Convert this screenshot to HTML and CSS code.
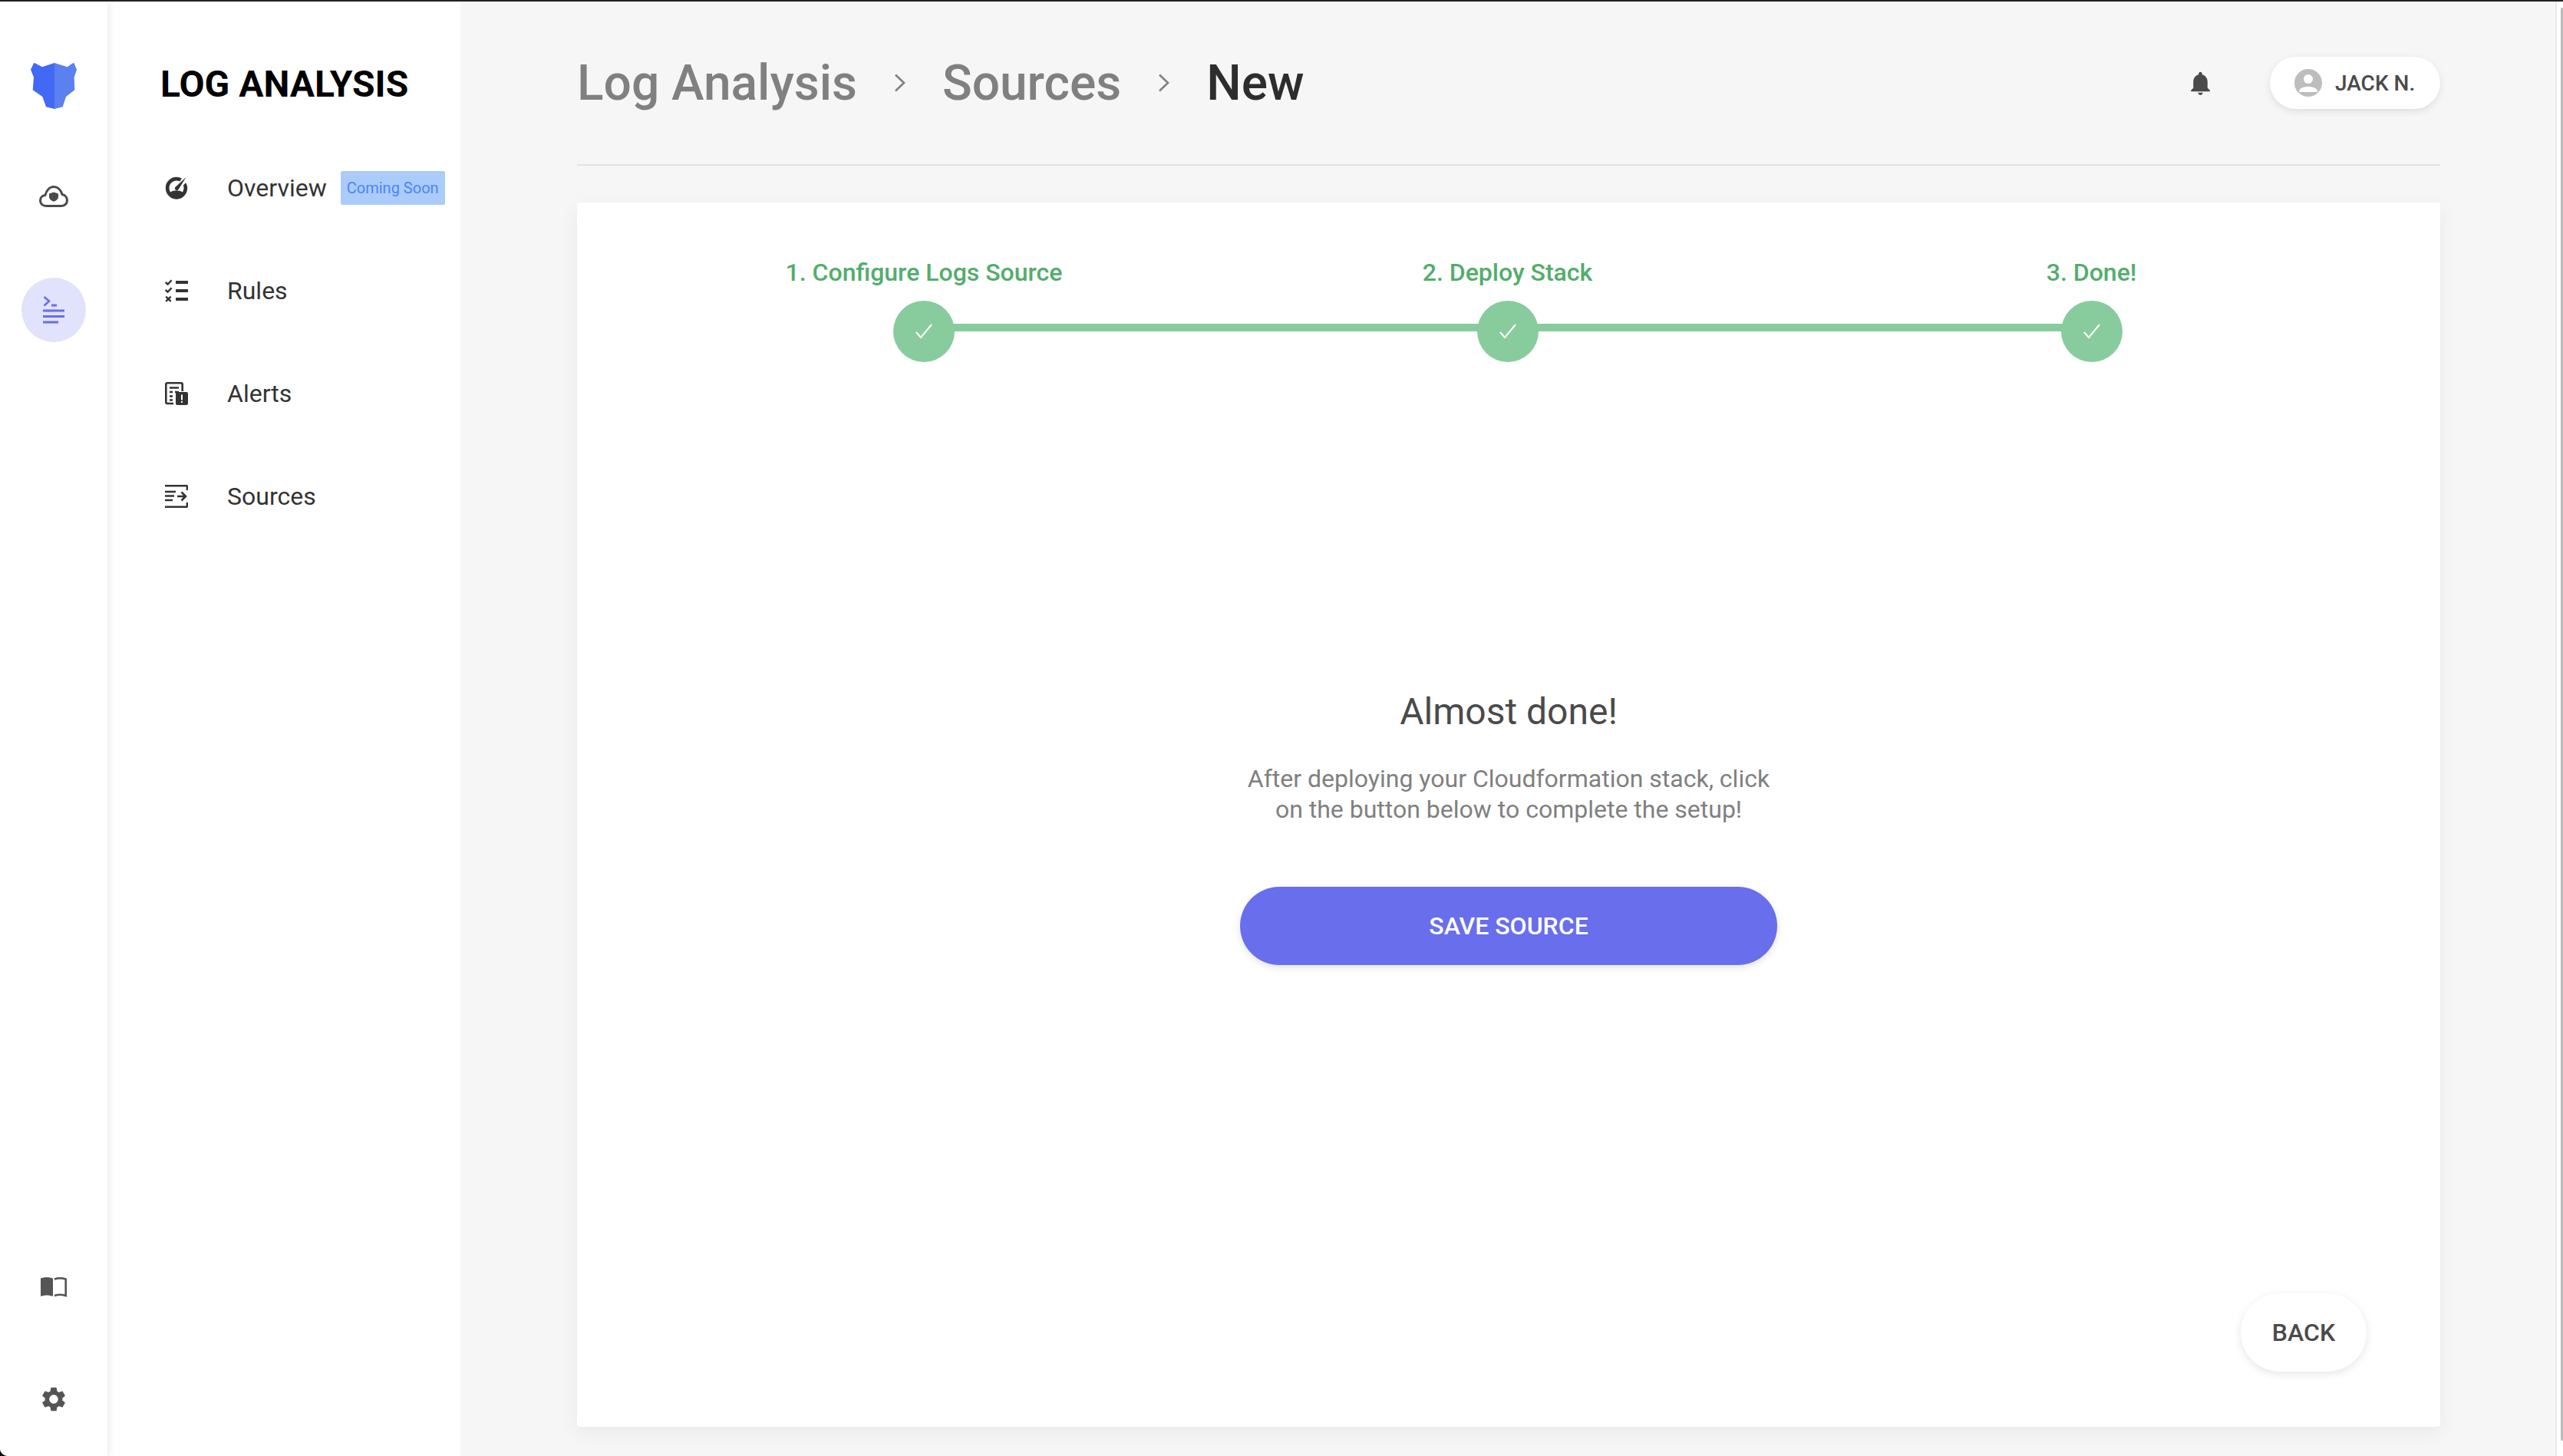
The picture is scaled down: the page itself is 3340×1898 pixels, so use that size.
FILE: index.html
```html
<!DOCTYPE html>
<html>
<head>
    <title>Log Analysis - New Source</title>
    <link rel="stylesheet" href="styles.css">
</head>
<body>
<div class="app">
    <div class="top-edge"></div>
    <div class="layout">
        <!-- Icon rail -->
        <aside class="rail">
            <svg class="logo" viewBox="0 0 60 60">
                <path fill="#4169f5" d="M31 0L15 5.3L5.5 .3L4 .3L0 8.7L4 18.7L2.7 35.3L15.3 44L20 57.3L31 60Z"/>
                <path fill="#5b80f0" d="M31 0L47.7 5.3L55 .3L56.5 .3L60 8.7L56.7 18.7L57.3 35.3L46 44L41.7 57.3L31 60Z"/>
            </svg>
            <div class="rail-item">
                <svg width="38" height="28" viewBox="0 0 38 28">
                    <path fill="none" stroke="#4a4a4a" stroke-width="3" stroke-linejoin="round" d="M9 26.5C4.6 26.5 1.5 23.4 1.5 19.5C1.5 15.6 4.4 12.8 8 12.5C9.6 6 13.8 1.5 19 1.5C24.2 1.5 28.4 5.6 30 11.5C33.8 12.2 36.5 15.2 36.5 19.3C36.5 23.4 33.4 26.5 29 26.5Z"/>
                    <path fill="#4a4a4a" d="M19 8.5L25 10.5V14.5C25 17.6 22.4 19.6 19 20.8C15.6 19.6 13 17.6 13 14.5V10.5Z"/>
                </svg>
            </div>
            <div class="rail-item rail-item-active">
                <svg width="28" height="36" viewBox="0 0 28 36">
                    <path fill="none" stroke="#686eec" stroke-width="2.6" d="M1.5 1L8 6.5L1.5 12.5"/>
                    <path fill="none" stroke="#686eec" stroke-width="3" d="M11 12H18M0 19H28M0 26.5H28M0 34H20"/>
                </svg>
            </div>
            <div class="rail-spacer"></div>
            <div class="rail-item">
                <svg class="rail-book" width="34" height="26" viewBox="0 0 34 26">
                    <path fill="#555" d="M0 1.5C5 -.5 11 -.5 16 1.5V25C11 23 5 23 0 25Z"/>
                    <path fill="none" stroke="#555" stroke-width="2.6" d="M18 2.5C22.5 .8 28 .8 32.7 2.5V24C28 22.4 22.5 22.4 18 24"/>
                </svg>
            </div>
            <div class="rail-item">
                <svg width="38" height="38" viewBox="0 0 24 24">
                    <path fill="#555" d="M19.14 12.94c.04-.3.06-.61.06-.94 0-.32-.02-.64-.07-.94l2.03-1.58c.18-.14.23-.41.12-.61l-1.92-3.32c-.12-.22-.37-.29-.59-.22l-2.39.96c-.5-.38-1.03-.7-1.62-.94l-.36-2.54c-.04-.24-.24-.41-.48-.41h-3.84c-.24 0-.43.17-.47.41l-.36 2.54c-.59.24-1.13.57-1.62.94l-2.39-.96c-.22-.08-.47 0-.59.22L2.74 8.87c-.12.21-.08.47.12.61l2.03 1.58c-.05.3-.09.63-.09.94s.02.64.07.94l-2.03 1.58c-.18.14-.23.41-.12.61l1.92 3.32c.12.22.37.29.59.22l2.39-.96c.5.38 1.03.7 1.62.94l.36 2.54c.05.24.24.41.48.41h3.84c.24 0 .44-.17.47-.41l.36-2.54c.59-.24 1.13-.56 1.62-.94l2.39.96c.22.08.47 0 .59-.22l1.92-3.32c.12-.22.07-.47-.12-.61l-2.01-1.58zM12 15.6c-1.98 0-3.6-1.62-3.6-3.6s1.62-3.6 3.6-3.6 3.6 1.62 3.6 3.6-1.62 3.6-3.6 3.6z"/>
                </svg>
            </div>
        </aside>

        <!-- Section nav -->
        <nav class="side-nav">
            <h2 class="side-title">LOG ANALYSIS</h2>
            <a class="nav-item">
                <svg class="nav-icon" viewBox="0 0 30 30">
                    <path fill="#333" d="M15 .8C17.6 .8 20 1.5 22 2.8L19.2 6.4C18 5.8 16.6 5.5 15 5.5C9.8 5.5 5.5 9.8 5.5 15C5.5 17 6.1 18.8 7.2 20.4C9 19 12 18.3 15 18.3C18 18.3 21 19 22.8 20.4C23.9 18.8 24.5 17 24.5 15C24.5 13.8 24.3 12.7 23.9 11.6L27 8.2C28.3 10.2 29.2 12.5 29.2 15C29.2 23.2 22.8 29.7 15 29.7C7.2 29.7 .8 23.2 .8 15C.8 7.2 7.2 .8 15 .8Z"/>
                    <path fill="#333" d="M27.5 1L17.5 17C16.6 18.2 15 18.4 13.8 17.5C12.7 16.6 12.5 15 13.4 14Z"/>
                </svg>
                <span>Overview</span>
                <span class="badge">Coming Soon</span>
            </a>
            <a class="nav-item">
                <svg class="nav-icon" viewBox="0 0 30 30">
                    <path fill="none" stroke="#333" stroke-width="2.4" d="M.8 4L3.6 6.6L8.6 1.2M.8 14L3.6 16.6L8.6 11.2M1.2 22.6L7.6 28.8M7.6 22.6L1.2 28.8"/>
                    <path fill="none" stroke="#333" stroke-width="4" d="M14 4H30M14 15H30M14 26H30"/>
                </svg>
                <span>Rules</span>
            </a>
            <a class="nav-item">
                <svg class="nav-icon" viewBox="0 0 30 30">
                    <path fill="none" stroke="#333" stroke-width="2.6" d="M11 28H3C2 28 1.3 27.3 1.3 26.3V3C1.3 2 2 1.3 3 1.3H21C22 1.3 22.7 2 22.7 3V12"/>
                    <path fill="none" stroke="#333" stroke-width="2.6" d="M6 7.5H18M6 13H10M13 13H18M6 18.5H10M6 23.5H10"/>
                    <rect x="14" y="13" width="16" height="17" rx="2" fill="#333"/>
                    <path fill="#fff" d="M21 16.5H23V23.5H21ZM21 25H23V27H21Z"/>
                </svg>
                <span>Alerts</span>
            </a>
            <a class="nav-item">
                <svg class="nav-icon" viewBox="0 0 30 30">
                    <path fill="none" stroke="#333" stroke-width="2.6" d="M0 1.3H28C28.8 1.3 29 2 29 3V7M0 28.7H28C28.8 28.7 29 28 29 27V23"/>
                    <path fill="none" stroke="#333" stroke-width="2.6" d="M0 9H14M0 14.5H12M0 20H10M16 15H26M21.5 9.5L27 15L21.5 20.5"/>
                </svg>
                <span>Sources</span>
            </a>
        </nav>

        <!-- Main content -->
        <main class="main">
            <header class="header">
                <div class="crumbs">
                    <span>Log Analysis</span>
                    <svg class="crumb-sep" width="16" height="24" viewBox="0 0 16 24"><path fill="none" stroke="#808080" stroke-width="2.6" d="M2 1.5L13 12L2 22.5"/></svg>
                    <span>Sources</span>
                    <svg class="crumb-sep" width="16" height="24" viewBox="0 0 16 24"><path fill="none" stroke="#808080" stroke-width="2.6" d="M2 1.5L13 12L2 22.5"/></svg>
                    <span class="crumb-current">New</span>
                </div>
                <div class="header-actions">
                    <svg class="bell" width="37" height="37" viewBox="0 0 24 24">
                        <path fill="#4a4a4a" d="M12 22c1.1 0 2-.9 2-2h-4c0 1.1.89 2 2 2zm6-6v-5c0-3.07-1.64-5.64-4.5-6.32V4c0-.83-.67-1.5-1.5-1.5s-1.5.67-1.5 1.5v.68C7.63 5.36 6 7.92 6 11v5l-2 2v1h16v-1l-2-2z"/>
                    </svg>
                    <button class="user-pill">
                        <svg width="36" height="36" viewBox="0 0 36 36">
                            <circle cx="18" cy="18" r="18" fill="#bdbdbd"/>
                            <circle cx="18" cy="13" r="6" fill="#fff"/>
                            <path fill="#fff" d="M6 30C6 25 11 23 18 23C25 23 30 25 30 30Z"/>
                        </svg>
                        <span>JACK N.</span>
                    </button>
                </div>
            </header>

            <section class="card">
                <div class="steps">
                    <div class="step">
                        <div class="step-label">1. Configure Logs Source</div>
                        <div class="step-dot"><svg width="26" height="24" viewBox="0 0 26 24"><path fill="none" stroke="#fff" stroke-width="2" d="M3 13L9 20L23 3"/></svg></div>
                    </div>
                    <div class="step">
                        <div class="step-label">2. Deploy Stack</div>
                        <div class="step-dot"><svg width="26" height="24" viewBox="0 0 26 24"><path fill="none" stroke="#fff" stroke-width="2" d="M3 13L9 20L23 3"/></svg></div>
                    </div>
                    <div class="step">
                        <div class="step-label">3. Done!</div>
                        <div class="step-dot"><svg width="26" height="24" viewBox="0 0 26 24"><path fill="none" stroke="#fff" stroke-width="2" d="M3 13L9 20L23 3"/></svg></div>
                    </div>
                </div>

                <div class="finish">
                    <h3 class="finish-title">Almost done!</h3>
                    <p class="finish-text">After deploying your Cloudformation stack, click<br>on the button below to complete the setup!</p>
                    <button class="save-button">SAVE SOURCE</button>
                </div>

                <div class="card-footer">
                    <button class="back-button">BACK</button>
                </div>
            </section>
        </main>

        <div class="scroll-strip"><div class="scroll-thumb"></div></div>
    </div>
</div>
</body>
</html>
```

FILE: styles.css
```css
* {
    box-sizing: border-box;
}
html, body {
    margin: 0;
    height: 100%;
    overflow: hidden;
    background: #000;
}
body {
    font-family: Roboto, "Liberation Sans", sans-serif;
    color: #333;
}
button {
    font-family: inherit;
    border: 0;
    cursor: pointer;
}

.app {
    height: 1898px;
    display: flex;
    flex-direction: column;
    background: #f6f6f6;
    border-bottom-left-radius: 10px;
    overflow: hidden;
}
.top-edge {
    height: 2px;
    background: #222;
    flex: none;
}
.layout {
    flex: 1;
    display: flex;
    min-height: 0;
}

/* --- Icon rail --- */
.rail {
    width: 140px;
    flex: none;
    background: #fff;
    display: flex;
    flex-direction: column;
    align-items: center;
    padding: 80px 0 32px;
    position: relative;
    z-index: 2;
    box-shadow: 3px 0 8px rgba(0, 0, 0, 0.07);
}
.logo {
    width: 60px;
    height: 60px;
    margin-bottom: 72px;
}
.rail-item {
    width: 84px;
    height: 84px;
    display: flex;
    align-items: center;
    justify-content: center;
    border-radius: 50%;
    flex: none;
}
.rail-item + .rail-item {
    margin-top: 64px;
}
.rail-item-active {
    background: #e1e2fb;
}
.rail-spacer {
    flex: 1;
}
.rail-spacer + .rail-item {
    margin-top: 0;
}
.rail-book {
    margin-top: 4px;
}

/* --- Section nav --- */
.side-nav {
    width: 460px;
    flex: none;
    background: #fff;
    padding: 80px 0 0 69px;
    display: flex;
    flex-direction: column;
    gap: 74px;
}
.side-title {
    margin: 0 0 3px;
    font-size: 48px;
    line-height: 56px;
    font-weight: 700;
    color: #000;
}
.nav-item {
    display: flex;
    align-items: center;
    height: 60px;
    font-size: 32px;
    color: #333;
    white-space: nowrap;
}
.nav-icon {
    width: 30px;
    height: 30px;
    margin: 0 51px 0 6px;
    flex: none;
}
.badge {
    width: 136px;
    height: 44px;
    margin-left: 18px;
    background: #abcbfb;
    border-radius: 2px;
    color: #4a87f0;
    font-size: 20px;
    line-height: 44px;
    text-align: center;
}

/* --- Main --- */
.main {
    flex: 1;
    min-width: 0;
    padding: 0 150px 38px 152px;
    display: flex;
    flex-direction: column;
}
.header {
    height: 214px;
    flex: none;
    display: flex;
    align-items: center;
    justify-content: space-between;
    border-bottom: 2px solid #e2e2e2;
}
.crumbs {
    display: flex;
    align-items: center;
    font-size: 64px;
    font-weight: 500;
    color: #808080;
}
.crumb-sep {
    margin: 0 47px 0 48px;
}
.crumb-current {
    color: #2d2d2d;
}
.header-actions {
    display: flex;
    align-items: center;
    gap: 72px;
}
.user-pill {
    width: 222px;
    height: 68px;
    padding: 0 0 0 32px;
    display: flex;
    align-items: center;
    gap: 17px;
    background: #fff;
    border-radius: 34px;
    box-shadow: 0 3px 10px rgba(0, 0, 0, 0.1);
    color: #4a4a4a;
    font-size: 28px;
    font-weight: 500;
}

/* --- Card --- */
.card {
    flex: 1;
    margin-top: 48px;
    background: #fff;
    border-radius: 4px;
    box-shadow: 0 8px 24px rgba(0, 0, 0, 0.06);
    display: flex;
    flex-direction: column;
    min-height: 0;
}
.steps {
    display: grid;
    grid-template-columns: 760px 761px 761px;
    padding: 71px 0 0 72px;
}
.step {
    position: relative;
    display: flex;
    flex-direction: column;
    align-items: center;
}
.step:not(:last-child)::after {
    content: "";
    position: absolute;
    top: 87px;
    left: 50%;
    width: 100%;
    height: 10px;
    background: #88cc9e;
}
.step-label {
    font-size: 32px;
    line-height: 40px;
    font-weight: 500;
    color: #53ad6c;
}
.step-dot {
    width: 80px;
    height: 80px;
    margin-top: 17px;
    border-radius: 50%;
    background: #88cc9e;
    display: flex;
    align-items: center;
    justify-content: center;
    position: relative;
    z-index: 1;
}
.finish {
    flex: 1;
    padding-top: 426px;
    display: flex;
    flex-direction: column;
    align-items: center;
    text-align: center;
}
.finish-title {
    margin: 0;
    font-size: 48px;
    line-height: 60px;
    font-weight: 400;
    color: #4a4a4a;
}
.finish-text {
    margin: 37px 0 0;
    font-size: 32px;
    line-height: 40px;
    color: #808080;
}
.save-button {
    width: 700px;
    height: 102px;
    margin-top: 81px;
    background: #686eec;
    color: #fff;
    font-size: 32px;
    font-weight: 500;
    border-radius: 51px;
    box-shadow: 0 3px 10px rgba(0, 0, 0, 0.12);
}
.card-footer {
    display: flex;
    justify-content: flex-end;
    padding: 0 96px 72px 0;
}
.back-button {
    width: 164px;
    height: 102px;
    background: #fff;
    color: #4a4a4a;
    font-size: 32px;
    font-weight: 500;
    border-radius: 51px;
    box-shadow: 0 3px 12px rgba(0, 0, 0, 0.1);
}

/* --- Window scrollbar strip --- */
.scroll-strip {
    width: 10px;
    flex: none;
    background: #fff;
    border-left: 2px solid #e8e8e8;
    padding: 8px 0 20px;
    display: flex;
    justify-content: flex-end;
}
.scroll-thumb {
    width: 3px;
    background: #bbb;
    border-radius: 2px 0 0 2px;
}
```
